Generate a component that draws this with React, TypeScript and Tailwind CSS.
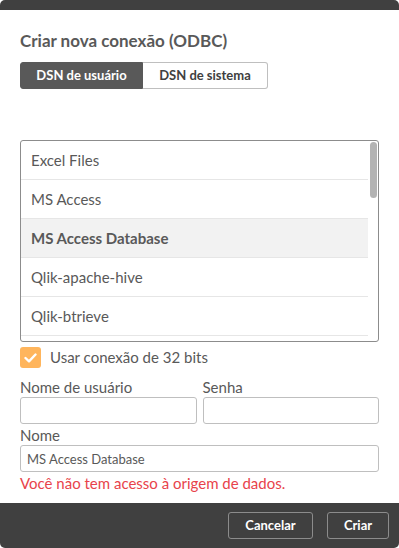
import { useState } from "react"

const sources = ["Excel Files", "MS Access", "MS Access Database", "Qlik-apache-hive", "Qlik-btrieve"]

export default function App() {
  const [tab, setTab] = useState("user")
  const [selected, setSelected] = useState("MS Access Database")
  const [use32, setUse32] = useState(true)

  return (
    <div className="w-[399px] h-[548px] bg-[#404040] rounded-[5px] flex flex-col pt-[10px] overflow-hidden" style={{ fontFamily: "Lato, 'Open Sans', sans-serif" }}>
      <div className="flex-1 min-h-0 bg-white px-5 pt-[20px] flex flex-col text-[#595959]">
        <h1 className="text-[17px] font-bold leading-[22px] text-[#595959]">Criar nova conexão (ODBC)</h1>

        <div className="flex mt-[10px] h-[27px] w-[248px] text-[13px] font-bold">
          <button
            onClick={() => setTab("user")}
            className={"w-[123px] rounded-l-[3px] border " + (tab === "user" ? "bg-[#595959] border-[#595959] text-white" : "bg-white border-[#bfbfbf] text-[#404040]")}
          >
            DSN de usuário
          </button>
          <button
            onClick={() => setTab("system")}
            className={"flex-1 rounded-r-[3px] border border-l-0 " + (tab === "system" ? "bg-[#595959] border-[#595959] text-white" : "bg-white border-[#bfbfbf] text-[#404040]")}
          >
            DSN de sistema
          </button>
        </div>

        <div className="mt-[51px] h-[202px] shrink-0 border border-[#8c8c8c] rounded-[3px] relative overflow-hidden">
          <div className="pr-[10px]">
            {sources.map(s => (
              <div
                key={s}
                onClick={() => setSelected(s)}
                className={"h-[39px] flex items-center pl-[10px] text-[15px] border-b border-[#e6e6e6] " + (selected === s ? "bg-[#f2f2f2] font-bold" : "")}
              >
                {s}
              </div>
            ))}
          </div>
          <div className="absolute right-[1px] top-[1px] w-[7px] h-[56px] rounded-full bg-[#b3b3b3]" />
        </div>

        <div className="flex items-center gap-[9px] mt-[5px] text-[15px] leading-[21px]">
          <button
            onClick={() => setUse32(!use32)}
            className={"w-[21px] h-[21px] shrink-0 rounded-[3px] flex items-center justify-center " + (use32 ? "bg-[#ffb55c]" : "border border-[#8c8c8c]")}
          >
            {use32 && (
              <svg width="13" height="10" viewBox="0 0 13 10">
                <path d="M1.5 5 L5 8.3 L11.5 1.5" fill="none" stroke="white" strokeWidth="2.4" strokeLinecap="round" strokeLinejoin="round" />
              </svg>
            )}
          </button>
          <span>Usar conexão de 32 bits</span>
        </div>

        <div className="grid grid-cols-2 gap-[6px] mt-[10px]">
          <div className="min-w-0 flex flex-col">
            <span className="text-[15px] leading-[18px]">Nome de usuário</span>
            <input className="w-full mt-[1px] h-[27px] border border-[#bfbfbf] rounded-[3px] outline-none px-2 text-[13px]" />
          </div>
          <div className="min-w-0 flex flex-col">
            <span className="text-[15px] leading-[18px]">Senha</span>
            <input type="password" className="w-full mt-[1px] h-[27px] border border-[#bfbfbf] rounded-[3px] outline-none px-2 text-[13px]" />
          </div>
        </div>

        <span className="text-[15px] leading-[18px] mt-[2px]">Nome</span>
        <input defaultValue="MS Access Database" className="w-full mt-[1px] h-[27px] border border-[#bfbfbf] rounded-[3px] outline-none px-[6px] text-[13px] text-[#595959]" />
        <p className="text-[15px] text-[#e8434b] mt-[2px] leading-[18px]">Você não tem acesso à origem de dados.</p>
      </div>

      <div className="h-[45px] shrink-0 flex items-center justify-end gap-[14px] pr-[10px]">
        <button className="h-[27px] w-[85px] border border-[#8c8c8c] rounded-[3px] text-white text-[13px] font-bold">Cancelar</button>
        <button className="h-[27px] w-[62px] border border-[#8c8c8c] rounded-[3px] text-white text-[13px] font-bold">Criar</button>
      </div>
    </div>
  )
}
